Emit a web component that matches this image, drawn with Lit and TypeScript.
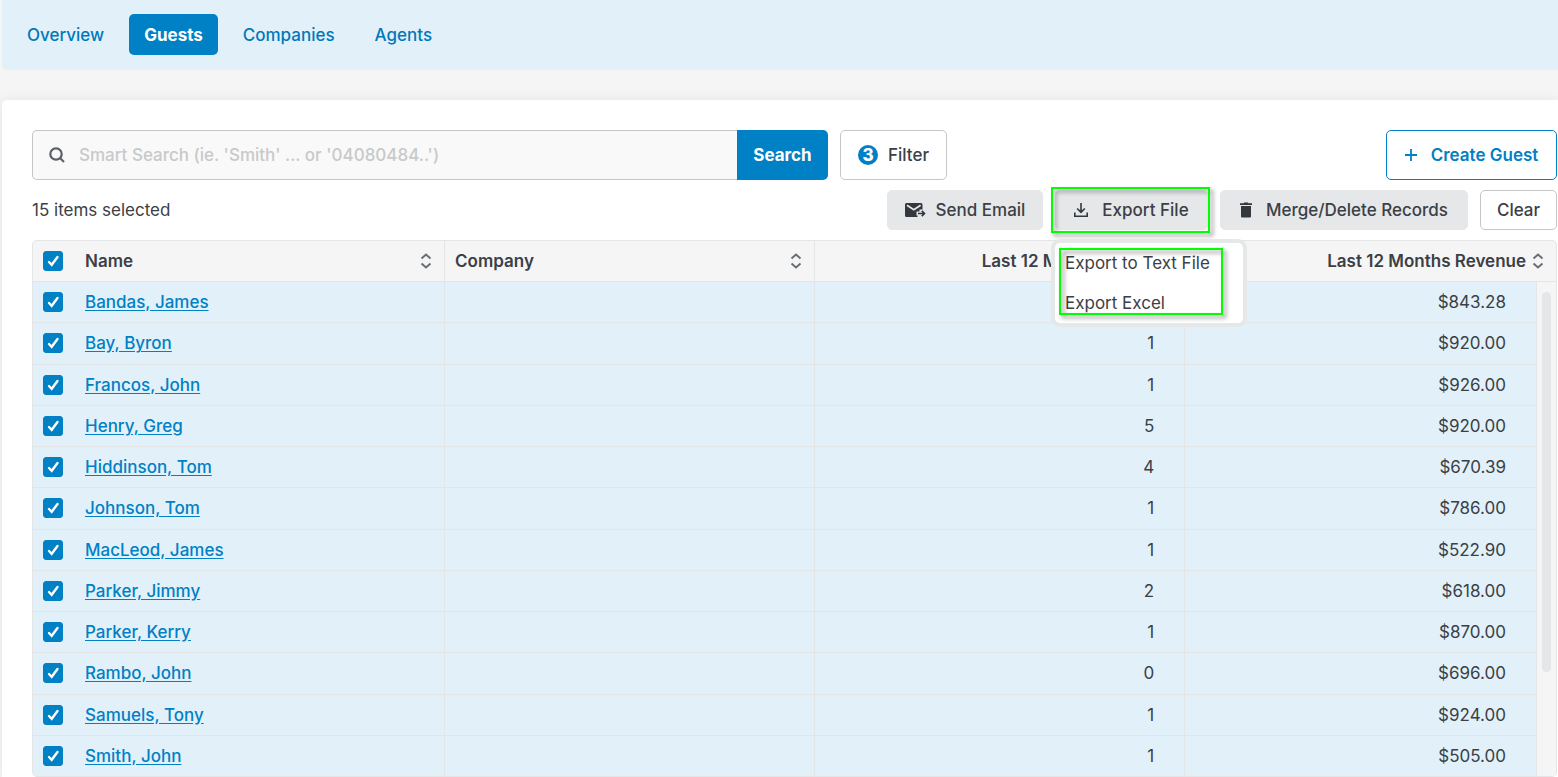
import { LitElement, html, css } from "lit";
import { customElement, state } from "lit/decorators.js";

interface Guest {
  name: string;
  company: string;
  stays: string;
  revenue: string;
}

const guest = (name: string, stays: string, revenue: string): Guest => ({ name, company: "", stays, revenue });

const GUESTS: Guest[] = [
  guest("Bandas, James", "", "$843.28"),
  guest("Bay, Byron", "1", "$920.00"),
  guest("Francos, John", "1", "$926.00"),
  guest("Henry, Greg", "5", "$920.00"),
  guest("Hiddinson, Tom", "4", "$670.39"),
  guest("Johnson, Tom", "1", "$786.00"),
  guest("MacLeod, James", "1", "$522.90"),
  guest("Parker, Jimmy", "2", "$618.00"),
  guest("Parker, Kerry", "1", "$870.00"),
  guest("Rambo, John", "0", "$696.00"),
  guest("Samuels, Tony", "1", "$924.00"),
  guest("Smith, John", "1", "$505.00"),
];

const searchIcon = html`<svg class="icon" width="16" height="16" viewBox="0 0 16 16" fill="none" stroke="#5a6067" stroke-width="2.2" aria-hidden="true"><circle cx="7" cy="7" r="5.7" /><path d="M11 11l4 4" /></svg>`;

const mailIcon = html`<svg class="icon" width="21" height="16" viewBox="0 0 21 16" aria-hidden="true"><path fill="#33383e" d="M1.500 1h14.500a1.500 1.500 0 0 1 1.500 1.500v5h-3v2h-3v4h1v1.500h-11a1.500 1.500 0 0 1-1.500-1.500v-11a1.500 1.500 0 0 1 1.500-1.500z" /><path d="M2 3.200l6.800 4.500 6.800-4.500" fill="none" stroke="#e6e7e8" stroke-width="1.700" /><path d="M13 11.500h6M16.800 8.900l2.600 2.600-2.600 2.600" fill="none" stroke="#33383e" stroke-width="1.700" /></svg>`;

const downloadIcon = html`<svg class="icon" width="14" height="14" viewBox="0 0 14 14" fill="none" stroke="#33383e" stroke-width="1.600" aria-hidden="true"><path d="M7 0v9M3.200 5.500L7 9.300l3.800-3.800M.8 9.500v3.700h12.400v-3.700" /></svg>`;

const trashIcon = html`<svg class="icon" width="12" height="16" viewBox="0 0 12 16" fill="#33383e" aria-hidden="true"><path d="M0 1.300h3.500L4.200.4h3.600l.7.900H12V3H0zM1 4h10v10.500a1 1 0 0 1-1 1H2a1 1 0 0 1-1-1z" /></svg>`;

const plusIcon = html`<svg class="icon" width="12" height="12" viewBox="0 0 12 12" stroke="#0080c5" stroke-width="1.800" aria-hidden="true"><path d="M6 0v12M0 6h12" /></svg>`;

const sortIcon = html`<svg class="icon" width="12" height="16" viewBox="0 0 12 16" fill="none" stroke="#686d73" stroke-width="1.900" aria-hidden="true"><path d="M1.500 5.500L6 1.500l4.500 4M1.500 10.500l4.500 4 4.500-4" /></svg>`;

@customElement("app-root")
export class AppRoot extends LitElement {
  @state() private tab = "Guests";
  @state() private menuOpen = true;

  static styles = css`
    :host {
      display: flex;
      flex-direction: column;
      gap: 30px;
      box-sizing: border-box;
      min-height: 100vh;
      padding-left: 2px;
      background: #f5f5f5;
      color: #3b4046;
      font: 400 17px/24px Inter, "Liberation Sans", sans-serif;
    }
    *, *::before, *::after { box-sizing: border-box; }
    button, input { font: inherit; color: inherit; margin: 0; }
    button { cursor: pointer; white-space: nowrap; }
    .icon { flex: none; display: block; }

    .tabs {
      display: flex;
      gap: 10px;
      height: 70px;
      padding: 14px 10px 15px;
      border-radius: 0 0 0 5px;
      background: #e2f1f9;
    }
    .tab {
      display: flex;
      align-items: center;
      padding: 0 15px;
      border-radius: 5px;
      color: #0078bb;
      font-weight: 500;
      text-decoration: none;
    }
    .tab.active { background: #0080c5; color: #fff; font-weight: 700; }

    .card {
      flex: 1;
      display: flex;
      flex-direction: column;
      gap: 10px;
      padding: 30px 1px 0 30px;
      border-radius: 5px 0 0 0;
      background: #fff;
      box-shadow: 0 0 14px rgba(0, 0, 0, 0.07);
    }
    .toolbar { display: flex; gap: 12px; height: 50px; }
    .search { display: flex; flex: 0 1 796px; }
    .field {
      display: flex;
      flex: 1;
      align-items: center;
      gap: 14px;
      padding-left: 16px;
      border: 1px solid #c4c6c8;
      border-right: 0;
      border-radius: 5px 0 0 5px;
      background: #f9f9f9;
    }
    .field input { flex: 1; min-width: 0; border: 0; padding: 0; outline: 0; background: none; font-weight: 500; }
    .field input::placeholder { color: #c7c9cb; opacity: 1; }
    .submit { width: 91px; padding: 0; border: 0; border-radius: 0 5px 5px 0; background: #0080c5; color: #fff; font-weight: 700; }
    .btn {
      display: flex;
      align-items: center;
      justify-content: center;
      gap: 14px;
      height: 100%;
      padding: 0;
      border: 1px solid #c4c6c8;
      border-radius: 5px;
      background: #fff;
      font-weight: 500;
    }
    .btn.filter { width: 107px; gap: 10px; }
    .count {
      width: 20px;
      height: 20px;
      border-radius: 50%;
      background: #0080c5;
      color: #fff;
      font-weight: 800;
      line-height: 20px;
    }
    .btn.create { width: 171px; margin-left: auto; border-color: #0080c5; color: #0080c5; font-weight: 600; }

    .actions { display: flex; align-items: center; gap: 12px; height: 40px; }
    .selected { margin-right: auto; }
    .btn.soft { border-color: #e6e7e8; background: #e6e7e8; }
    .btn.send { width: 156px; gap: 10px; }
    .export { width: 153px; }
    .merge { width: 248px; }
    .clear { width: 77px; }

    .dropdown { position: relative; height: 100%; }
    .mark {
      position: absolute;
      border: 2px solid #00ff00;
      filter: drop-shadow(3px 3px 2px rgba(0, 0, 0, 0.45));
      pointer-events: none;
    }
    .mark.around-button { inset: -3px -2px -3px -4px; }
    .mark.around-items { inset: 5px 20px 8px 4px; }
    .menu {
      position: absolute;
      z-index: 2;
      top: 53px;
      left: 0;
      width: 188px;
      border-radius: 5px;
      background: #fff;
      box-shadow: 0 0 0 4px #e6e7e8;
    }
    .menu button { display: block; width: 100%; height: 40px; padding: 0 10px; border: 0; background: none; text-align: left; }

    .grid { display: flex; flex: 1; }
    table {
      width: 100%;
      min-height: 100%;
      table-layout: fixed;
      border-collapse: separate;
      border-spacing: 0;
      border: 1px solid #e4e5e6;
      border-bottom: 0;
      border-radius: 5px;
      overflow: hidden;
      background: #f5f5f5;
    }
    .c-check { width: 42px; }
    .c-data { width: 24.3%; }
    .c-bar { width: 19px; }
    th, td { padding: 0 0 0 10px; border-bottom: 1px solid #e4e5e6; text-align: left; }
    th { height: 41px; font-weight: 600; }
    td { height: 41px; background: #e2f1f9; }
    th.line, td.line { border-right: 1px solid #e4e5e6; }
    .head { display: flex; align-items: center; justify-content: space-between; padding-right: 12px; }
    .head.end { justify-content: flex-end; gap: 6px; }
    td.num { padding-right: 30px; text-align: right; }
    td.bar { padding: 10px 5px; background: #f5f5f5; vertical-align: top; }
    .thumb { width: 9px; height: 380px; border-radius: 5px; background: #e4e6e8; }
    .check { display: grid; width: 20px; height: 20px; }
    .check input, .check svg { grid-area: 1 / 1; width: 20px; height: 20px; }
    .check input { appearance: none; border: 1px solid #0080c5; border-radius: 3px; background: #fff; }
    .check input:checked { background: #0080c5; }
    .check svg { pointer-events: none; }
    .name { color: #0080c5; font-weight: 500; text-underline-offset: 2px; }
  `;

  private checkbox(label: string) {
    return html`<label class="check">
      <input type="checkbox" aria-label=${label} checked />
      <svg viewBox="0 0 20 20" fill="none" stroke="#fff" stroke-width="2.400" stroke-linecap="round" aria-hidden="true"><path d="M6 11l2.700 2.800L14.500 6" /></svg>
    </label>`;
  }

  render() {
    return html`
      <nav class="tabs" aria-label="Profiles">
        ${["Overview", "Guests", "Companies", "Agents"].map(
          (t) => html`<a class=${t === this.tab ? "tab active" : "tab"} href="#" @click=${() => (this.tab = t)}>${t}</a>`
        )}
      </nav>
      <main class="card">
        <div class="toolbar">
          <form class="search" @submit=${(e: Event) => e.preventDefault()}>
            <label class="field">
              ${searchIcon}
              <input type="text" aria-label="Smart Search" placeholder="Smart Search (ie. 'Smith' ... or '04080484..')" />
            </label>
            <button class="submit" type="submit">Search</button>
          </form>
          <button class="btn filter"><span class="count">3</span>Filter</button>
          <button class="btn create">${plusIcon}Create Guest</button>
        </div>
        <div class="actions">
          <span class="selected">15 items selected</span>
          <button class="btn soft send">${mailIcon}Send Email</button>
          <div class="dropdown">
            <button class="btn soft export" aria-expanded=${this.menuOpen} @click=${() => (this.menuOpen = !this.menuOpen)}>
              ${downloadIcon}Export File
            </button>
            <span class="mark around-button"></span>
            ${this.menuOpen
              ? html`<div class="menu">
                  <button>Export to Text File</button>
                  <button>Export Excel</button>
                  <span class="mark around-items"></span>
                </div>`
              : null}
          </div>
          <button class="btn soft merge">${trashIcon}Merge/Delete Records</button>
          <button class="btn clear">Clear</button>
        </div>
        <div class="grid">
          <table>
            <colgroup>
              <col class="c-check" /><col class="c-data" /><col class="c-data" /><col class="c-data" /><col /><col class="c-bar" />
            </colgroup>
            <thead>
              <tr>
                <th>${this.checkbox("Select all guests")}</th>
                <th class="line"><div class="head">Name ${sortIcon}</div></th>
                <th class="line"><div class="head">Company ${sortIcon}</div></th>
                <th><div class="head end">Last 12 Months Stays ${sortIcon}</div></th>
                <th colspan="2"><div class="head end">Last 12 Months Revenue ${sortIcon}</div></th>
              </tr>
            </thead>
            <tbody>
              ${GUESTS.map(
                (g, i) => html`<tr>
                  <td>${this.checkbox(`Select ${g.name}`)}</td>
                  <td class="line"><a class="name" href="#">${g.name}</a></td>
                  <td class="line">${g.company}</td>
                  <td class="line num">${g.stays}</td>
                  <td class="line num">${g.revenue}</td>
                  ${i === 0 ? html`<td class="bar" rowspan=${GUESTS.length}><div class="thumb"></div></td>` : null}
                </tr>`
              )}
            </tbody>
          </table>
        </div>
      </main>
    `;
  }
}
